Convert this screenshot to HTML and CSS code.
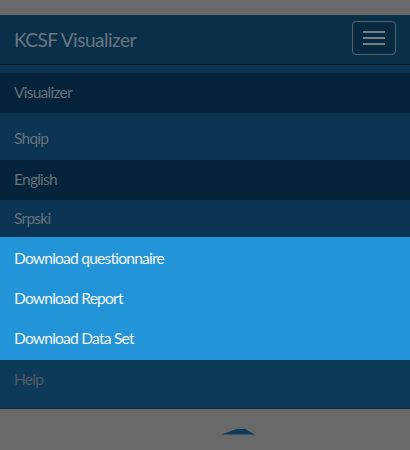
FILE: index.html
```html
<!DOCTYPE html>
<html lang="en">
<head>
<meta charset="utf-8">
<title>KCSF Visualizer</title>
<link rel="stylesheet" href="styles.css">
</head>
<body>
<div class="topgap"></div>
<nav class="navbar">
  <div class="navbar-header">
    <span class="brand">KCSF Visualizer</span>
    <button class="toggle" type="button" aria-label="Toggle navigation">
      <span class="bar"></span>
      <span class="bar"></span>
      <span class="bar"></span>
    </button>
  </div>
  <div class="collapse">
    <div class="item dark visualizer">Visualizer</div>
    <div class="item light shqip">Shqip</div>
    <div class="item dark english">English</div>
    <div class="item light srpski">Srpski</div>
    <div class="downloads">
      <div class="dl">Download questionnaire</div>
      <div class="dl">Download Report</div>
      <div class="dl">Download Data Set</div>
    </div>
    <div class="item help">Help</div>
  </div>
</nav>
<div class="footer">
  <svg class="caret" width="34" height="6" viewBox="0 0 34 6"><polygon points="0,5.5 16,0 24,0 34,5.5" fill="#0b3a5a"/></svg>
</div>
</body>
</html>
```
FILE: styles.css
```css
html, body {
  margin: 0;
  padding: 0;
  background: #696969;
  font-family: Lato, "Liberation Sans", sans-serif;
  width: 410px;
  height: 450px;
  overflow: hidden;
}
.topgap {
  height: 15px;
}
.navbar {
  background: #0b3552;
}
.navbar-header {
  height: 49px;
  background: #0a3049;
  border-bottom: 1px solid #02121d;
  display: flex;
  align-items: center;
  justify-content: space-between;
  padding: 0 14px 0 14px;
}
.brand {
  font-size: 19px;
  letter-spacing: -0.5px;
  color: #6b7680;
  line-height: 49px;
  margin-top: -1px;
}
.toggle {
  width: 44px;
  height: 34px;
  box-sizing: border-box;
  padding: 9px 10px;
  border: 1px solid #56636c;
  border-radius: 4px;
  background: #072a40;
  display: flex;
  flex-direction: column;
  gap: 4px;
  margin-top: -3px;
}
.bar {
  display: block;
  width: 22px;
  height: 2px;
  background: #7b7f83;
}
.collapse {
  padding-top: 8px;
}
.item, .dl {
  font-size: 15.5px;
  letter-spacing: -0.75px;
  padding-left: 14px;
}
.item {
  color: #66727c;
}
.dark {
  background: #05233a;
}
.light {
  background: #0b3552;
}
.visualizer {
  line-height: 38px;
  padding-bottom: 2px;
}
.shqip {
  line-height: 40px;
  padding-top: 5px;
  padding-bottom: 2px;
}
.english {
  line-height: 38px;
  padding-bottom: 2px;
}
.srpski {
  line-height: 37px;
}
.downloads {
  background: #2394d8;
  padding: 1px 0 2px;
}
.dl {
  color: #f2f6fa;
  line-height: 40px;
}
.help {
  background: #0d3a58;
  color: #4e5c67;
  line-height: 38px;
  padding-bottom: 10px;
  border-bottom: 1px solid #092d45;
}
.footer {
  display: flex;
  justify-content: center;
  padding-top: 20px;
  padding-left: 66px;
}
.caret {
  display: block;
}
```
